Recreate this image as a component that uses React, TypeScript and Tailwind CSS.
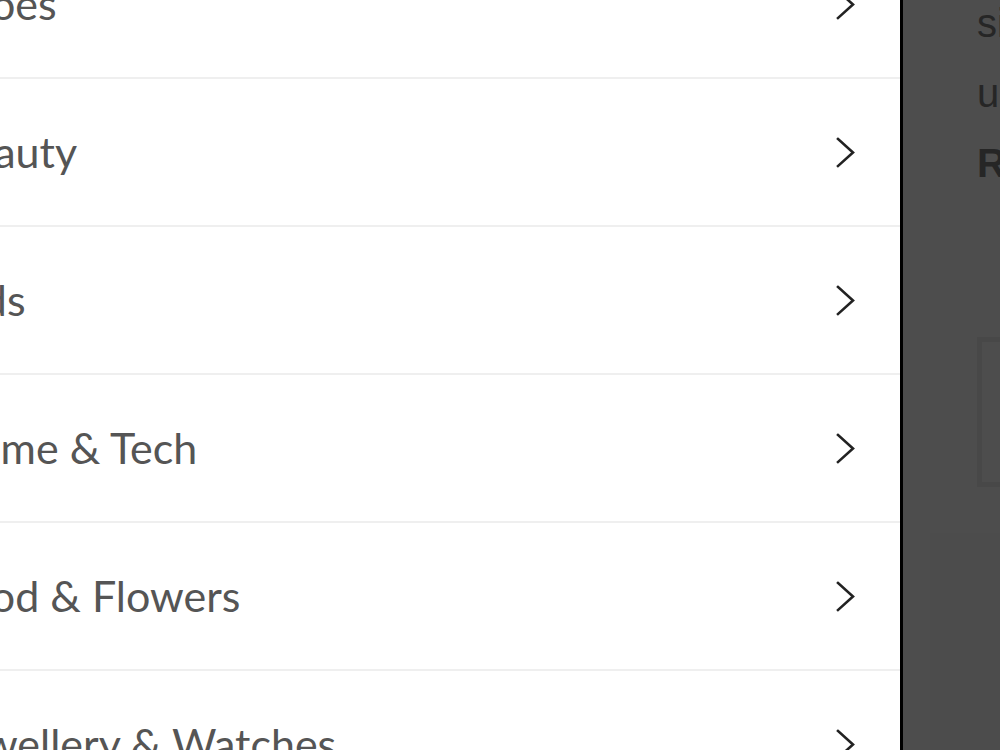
import React from 'react';

const categories = ['Shoes', 'Beauty', 'Kids', 'Home & Tech', 'Food & Flowers', 'Jewellery & Watches'];

const Chevron: React.FC = () => (
  <svg className="w-[20px] h-[32px] shrink-0" viewBox="0 0 20 32" fill="none" stroke="#222222" strokeWidth={2.6} strokeLinecap="square">
    <polyline points="2,3 17,16.5 2,30" />
  </svg>
);

const CategoryRow: React.FC<{ label: string }> = ({ label }) => (
  <button className="w-full h-[148px] flex items-center justify-between border-b-2 border-[#efefef] bg-white pl-[44px] pr-[44px] text-left">
    <span className="text-[43px] text-[#555555] whitespace-nowrap" style={{ fontFamily: 'Lato, sans-serif' }}>{label}</span>
    <Chevron />
  </button>
);

const App: React.FC = () => {
  return (
    <div className="w-[1000px] h-[750px] flex overflow-hidden bg-[#4d4d4d]">
      {/* slide-out category menu */}
      <div className="w-[903px] shrink-0 h-full bg-white border-r-[3px] border-black overflow-hidden">
        <div className="-mt-[69px] -ml-[100px] w-[1000px]">
          {categories.map((c) => <CategoryRow key={c} label={c} />)}
        </div>
      </div>

      {/* dimmed page behind the menu */}
      <div className="flex-1 h-full overflow-hidden flex flex-col">
        <div className="pl-[74px] -mt-[12px] text-[40px] leading-[70px] text-[#262626] whitespace-nowrap" style={{ fontFamily: '"Liberation Sans", Arial, sans-serif' }}>
          <p>sign up to our newsletter</p>
          <p>unlock exclusive offers</p>
          <p className="font-bold">Read more</p>
        </div>
        <div className="ml-[74px] mt-[139px] h-[150px] w-[300px] shrink-0 border-[5px] border-[#484848]"></div>
        <div className="ml-[27px] mt-[46px] flex-1 bg-[#4c4c4c]"></div>
      </div>
    </div>
  );
};

export default App;
